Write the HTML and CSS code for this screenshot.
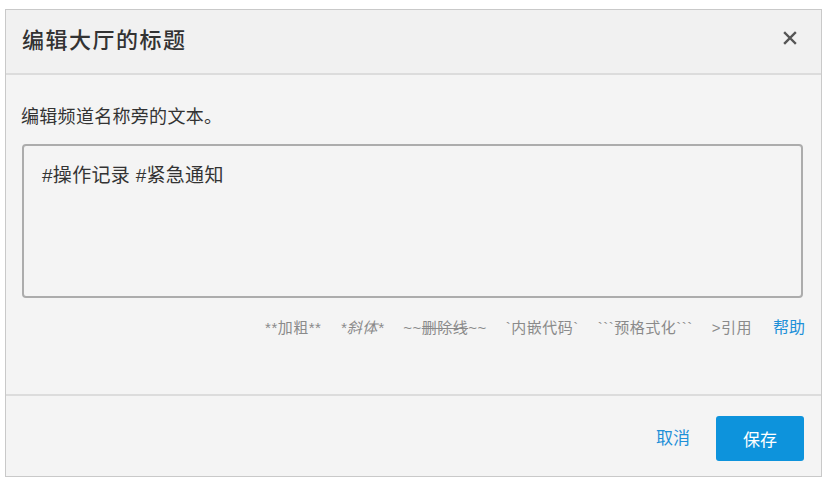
FILE: index.html
```html
<!DOCTYPE html>
<html lang="zh-CN">
<head>
<meta charset="utf-8">
<title>编辑大厅的标题</title>
<link rel="stylesheet" href="styles.css">
</head>
<body>
<div class="dialog">
  <div class="dialog-header">
    <h1 class="dialog-title">编辑大厅的标题</h1>
    <button class="close" aria-label="关闭">
      <svg width="14" height="14" viewBox="0 0 14 14"><path d="M2 2L12 12M12 2L2 12" stroke="#555" stroke-width="2.4" stroke-linecap="square"/></svg>
    </button>
  </div>
  <div class="dialog-body">
    <p class="desc">编辑频道名称旁的文本。</p>
    <div class="textarea">#操作记录 #紧急通知</div>
    <div class="hints">
      <span class="hint">**加粗**</span>
      <span class="hint"><i>*斜体*</i></span>
      <span class="hint">~~<s>删除线</s>~~</span>
      <span class="hint">`内嵌代码`</span>
      <span class="hint">```预格式化```</span>
      <span class="hint">&gt;引用</span>
      <a class="help">帮助</a>
    </div>
  </div>
  <div class="dialog-footer">
    <a class="cancel">取消</a>
    <button class="save">保存</button>
  </div>
</div>
</body>
</html>
```
FILE: styles.css
```css
* { box-sizing: border-box; }
html, body { margin: 0; padding: 0; background: #ffffff; }
body {
  font-family: "Liberation Sans", "Noto Sans CJK SC", sans-serif;
  color: #333;
}
.dialog {
  margin: 9px 0 0 5px;
  width: 817px;
  height: 468px;
  border: 1px solid #c9c9c9;
  background: #f4f4f4;
  display: flex;
  flex-direction: column;
}
.dialog-header {
  height: 65px;
  flex: none;
  display: flex;
  align-items: center;
  justify-content: space-between;
  padding: 0 24px 8px 16px;
  border-bottom: 2px solid #dcdcdc;
  background: #f1f1f1;
}
.dialog-title {
  margin: 0;
  font-size: 22px;
  font-weight: 500;
  color: #333;
  letter-spacing: 1.5px;
}
.close {
  background: none;
  border: 0;
  padding: 0;
  width: 14px;
  height: 14px;
  display: flex;
}
.dialog-body {
  flex: 1;
  padding: 0 18px 0 16px;
  display: flex;
  flex-direction: column;
}
.desc {
  margin: 30px 0 0 -1px;
  font-size: 18px;
  line-height: 24px;
  color: #333;
  letter-spacing: 0.3px;
}
.textarea {
  margin-top: 15px;
  height: 154px;
  border: 2px solid #acacac;
  border-radius: 4px;
  background: #f4f4f4;
  padding: 17px 0 0 18px;
  font-size: 19px;
  line-height: 26px;
  color: #333;
  letter-spacing: 0.3px;
}
.hints {
  margin-top: 16px;
  display: flex;
  justify-content: flex-end;
  align-items: center;
  gap: 19px;
  font-size: 15px;
  letter-spacing: 0.5px;
  color: #8a8a8a;
}
.hint i { font-style: italic; }
.help {
  margin-left: 2px;
  margin-right: -2px;
  font-size: 16px;
  letter-spacing: 0;
  color: #1e90d8;
}
.dialog-footer {
  height: 82px;
  flex: none;
  border-top: 2px solid #dcdcdc;
  display: flex;
  justify-content: flex-end;
  align-items: flex-start;
  padding: 20px 17px 0 0;
  gap: 26px;
}
.cancel {
  font-size: 17px;
  color: #1e90d8;
  line-height: 45px;
}
.save {
  width: 88px;
  height: 45px;
  border: 0;
  border-radius: 3px;
  background: #0d93dc;
  color: #fff;
  font-family: inherit;
  font-size: 17px;
}
```
